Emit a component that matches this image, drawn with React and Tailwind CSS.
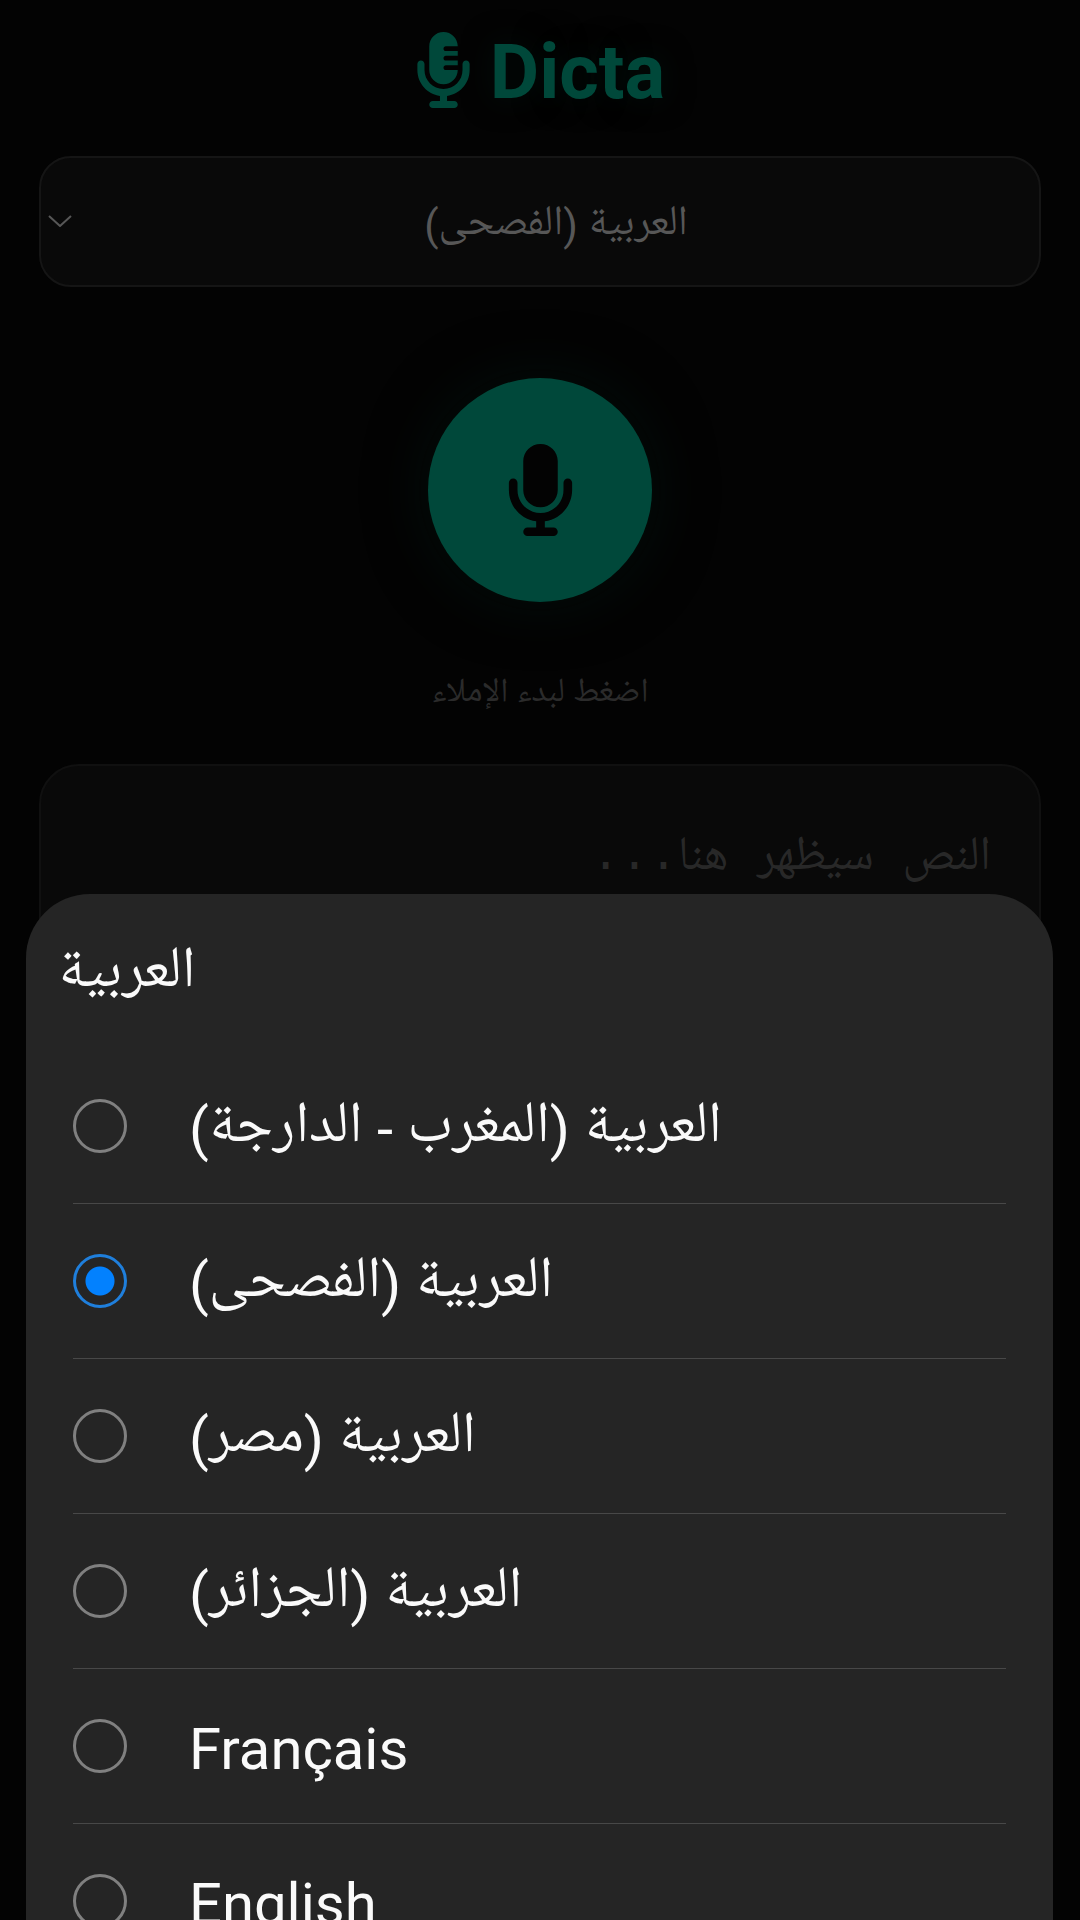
import { useState } from "react"
import { FaMicrophone, FaMicrophoneLines } from "react-icons/fa6"

const languages = [
  { key: "ar-MA", label: "العربية (المغرب - الدارجة)", dir: "rtl" },
  { key: "ar-SA", label: "العربية (الفصحى)", dir: "rtl" },
  { key: "ar-EG", label: "العربية (مصر)", dir: "rtl" },
  { key: "ar-DZ", label: "العربية (الجزائر)", dir: "rtl" },
  { key: "fr-FR", label: "Français", dir: "ltr" },
  { key: "en-US", label: "English", dir: "ltr" },
]

function LanguageOption({ language, checked, onSelect }) {
  return (
    <label className="flex items-center h-[155px] border-b border-[#484848] cursor-pointer">
      <input
        type="radio"
        name="language"
        value={language.key}
        checked={checked}
        onChange={() => onSelect(language.key)}
        className="appearance-none shrink-0 w-[54px] h-[54px] rounded-full border-[3px] border-[#808080] checked:border-[#1f7fdc] checked:bg-[radial-gradient(circle,#0381fe_14px,transparent_15px)]"
      />
      <span dir={language.dir} className="ml-[62px] pt-[6px] text-[58px] leading-[72px] text-[#fafafa] whitespace-nowrap">
        {language.label}
      </span>
    </label>
  )
}

export default function App() {
  const [selected, setSelected] = useState("ar-SA")
  const [text, setText] = useState("")

  return (
    <div className="relative h-screen overflow-hidden bg-[#030303] font-[Roboto,'Noto_Naskh_Arabic_UI','Noto_Naskh_Arabic','Noto_Sans_Arabic',sans-serif]">
      <main dir="rtl" className="flex flex-col items-center px-[39px] pt-6">
        <h1 dir="ltr" className="flex items-center gap-[18px] h-[92px] text-[76px] font-bold text-[#00483a] [text-shadow:0_0_30px_#030e0b]">
          <FaMicrophoneLines className="w-[57px]" />
          <span className="pt-1">Dicta</span>
        </h1>

        <div className="relative w-full mt-10">
          <select
            aria-label="اللغة"
            value={selected}
            onChange={(e) => setSelected(e.target.value)}
            className="appearance-none block w-full h-[131px] pl-8 pt-2 rounded-[32px] border-2 border-[#151515] bg-[#090909] text-[42px] text-[#575757] text-center [text-align-last:center]"
          >
            {languages.map((language) => (
              <option key={language.key} value={language.key}>{language.label}</option>
            ))}
          </select>
          <svg viewBox="0 0 24 12" className="absolute left-[9px] top-[59px] w-6 h-3 pointer-events-none" fill="none" stroke="#575757" strokeWidth="2">
            <path d="M1 1 L12 11 L23 1" />
          </svg>
        </div>

        <button
          aria-label="ابدأ الإملاء"
          className="flex items-center justify-center mt-[91px] w-56 h-56 rounded-full bg-[#00483a] text-[#030303] shadow-[0_0_60px_#030e0b]"
        >
          <FaMicrophone className="w-[69px] h-[92px]" />
        </button>

        <p className="mt-[66px] h-24 text-[34px] leading-[52px] text-[#2b2b2b]">اضغط لبدء الإملاء</p>

        <textarea
          dir="rtl"
          aria-label="النص"
          value={text}
          onChange={(e) => setText(e.target.value)}
          placeholder="النص سيظهر هنا..."
          className="block w-full h-[600px] p-12 rounded-[40px] border-2 border-[#101010] bg-[#090909] text-[48px] leading-[84px] text-[#575757] placeholder:text-[#282828] resize-none font-['Liberation_Mono','Noto_Naskh_Arabic','Noto_Sans_Arabic',monospace]"
        />
      </main>

      <div className="absolute inset-0 flex flex-col justify-end pl-[26px] pr-[27px]">
        <section className="h-[1026px] rounded-t-[64px] bg-[#252525] overflow-hidden">
          <h2 className="px-8 pt-10 h-[155px] text-[58px] leading-[80px] text-[#fafafa]">العربية</h2>
          <div role="radiogroup" aria-label="اللغة" className="px-[47px]">
            {languages.map((language) => (
              <LanguageOption
                key={language.key}
                language={language}
                checked={language.key === selected}
                onSelect={setSelected}
              />
            ))}
          </div>
        </section>
      </div>
    </div>
  )
}
